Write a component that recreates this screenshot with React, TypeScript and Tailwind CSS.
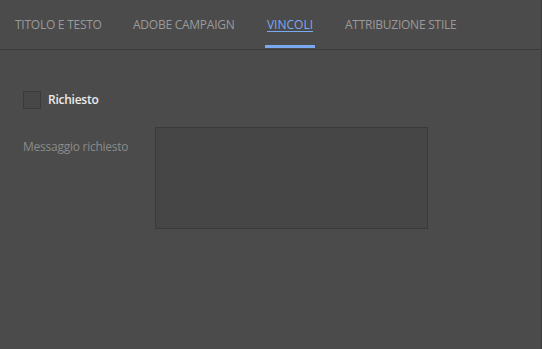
import React from "react";

const tabs = [
  { t: "TITOLO E TESTO", w: "w-[118px]" },
  { t: "ADOBE CAMPAIGN", w: "w-[132px]" },
  { t: "VINCOLI", w: "w-[80px]" },
  { t: "ATTRIBUZIONE STILE", w: "w-[130px]" },
];

export default function App() {
  return (
    <div
      className="w-[542px] h-[349px] bg-[#4b4b4b] border-r border-[#3a3a3a] overflow-hidden tracking-[-0.25px]"
      style={{ fontFamily: '"Open Sans", "Noto Sans", sans-serif' }}
    >
      <div className="h-[50px] border-b border-[#3c3c3c] flex items-stretch pl-[15px]">
        {tabs.map((tab, i) => {
          const active = i === 2;
          return (
            <div key={tab.t} className={"flex items-stretch " + tab.w}>
              {active ? (
                <div className="relative w-[50px] flex items-center justify-center text-[12px] tracking-[0px] text-[#7aa9f0] underline underline-offset-2">
                  {tab.t}
                  <div className="absolute left-0 right-0 bottom-[1px] h-[3px] bg-[#7aa9f0]" />
                </div>
              ) : (
                <div className="flex items-center text-[12px] text-[#9a9a9a]">{tab.t}</div>
              )}
            </div>
          );
        })}
      </div>
      <div className="pl-[23px] pt-[41px]">
        <div className="flex items-center gap-[7px]">
          <div className="w-[18px] h-[18px] border border-[#3a3a3a] bg-[#474747]" />
          <span className="text-[12px] text-[#ececec] font-semibold">Richiesto</span>
        </div>
        <div className="flex mt-[18px]">
          <div className="w-[132px] pt-[11px] text-[12px] text-[#8a8a8a]">Messaggio richiesto</div>
          <div className="w-[273px] h-[102px] bg-[#464646] border border-[#3a3a3a]" />
        </div>
      </div>
    </div>
  );
}
